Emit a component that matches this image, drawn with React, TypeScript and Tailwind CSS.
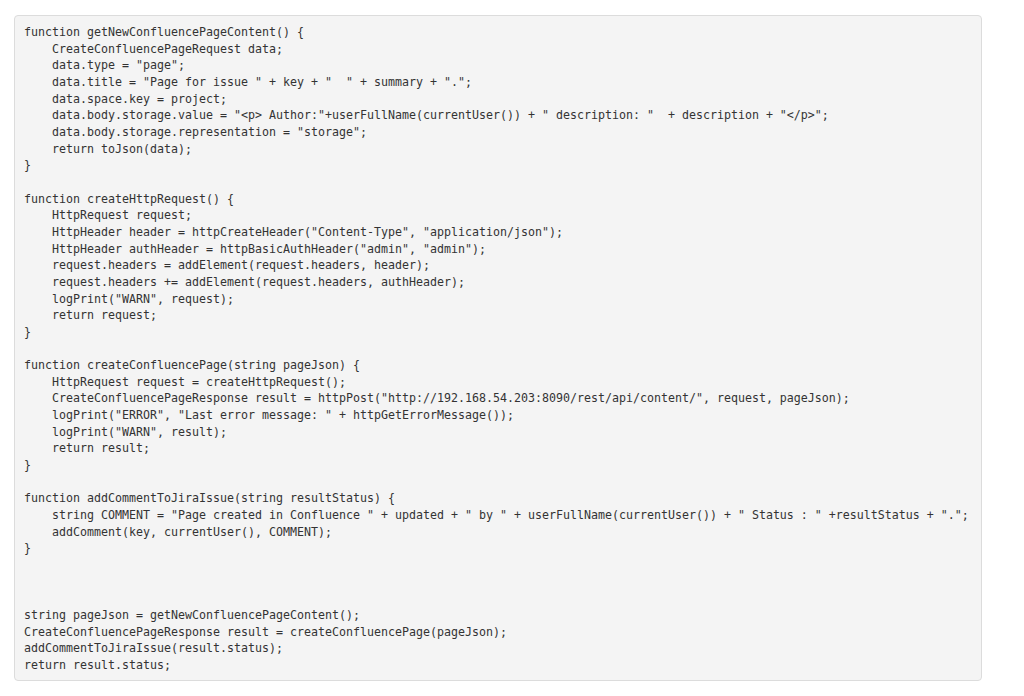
import React from 'react';

const code = `function getNewConfluencePageContent() {
    CreateConfluencePageRequest data;
    data.type = "page";
    data.title = "Page for issue " + key + "  " + summary + ".";
    data.space.key = project;
    data.body.storage.value = "<p> Author:"+userFullName(currentUser()) + " description: "  + description + "</p>";
    data.body.storage.representation = "storage";
    return toJson(data);
}

function createHttpRequest() {
    HttpRequest request;
    HttpHeader header = httpCreateHeader("Content-Type", "application/json");
    HttpHeader authHeader = httpBasicAuthHeader("admin", "admin");
    request.headers = addElement(request.headers, header);
    request.headers += addElement(request.headers, authHeader);
    logPrint("WARN", request);
    return request;
}

function createConfluencePage(string pageJson) {
    HttpRequest request = createHttpRequest();
    CreateConfluencePageResponse result = httpPost("http://192.168.54.203:8090/rest/api/content/", request, pageJson);
    logPrint("ERROR", "Last error message: " + httpGetErrorMessage());
    logPrint("WARN", result);
    return result;
}

function addCommentToJiraIssue(string resultStatus) {
    string COMMENT = "Page created in Confluence " + updated + " by " + userFullName(currentUser()) + " Status : " +resultStatus + ".";
    addComment(key, currentUser(), COMMENT);
}



string pageJson = getNewConfluencePageContent();
CreateConfluencePageResponse result = createConfluencePage(pageJson);
addCommentToJiraIssue(result.status);
return result.status;`;

export default function App() {
  return (
    <div className="min-h-[696px] bg-white pt-[15px] pl-[14px]">
      <pre className="w-[968px] rounded-[4px] border border-[#dcdcdc] bg-[#f4f4f4] pl-[9px] pr-[9px] pt-[8px] pb-[6px] font-['DejaVu_Sans_Mono',monospace] text-[11.63px] leading-[16.66px] text-[#333333] whitespace-pre">
        {code}
      </pre>
    </div>
  );
}
